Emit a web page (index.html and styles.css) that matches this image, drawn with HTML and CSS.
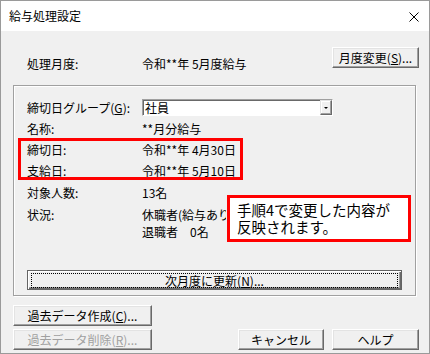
FILE: index.html
```html
<!DOCTYPE html>
<html lang="ja">
<head>
  <meta charset="UTF-8">
  <title>給与処理設定</title>
  <link rel="stylesheet" href="styles.css">
</head>
<body>

<div class="window">
  <div class="titlebar">
    <span class="title">給与処理設定</span>
    <svg class="close" width="10" height="10" viewBox="0 0 10 10">
      <path d="M0.5 0.5 L9.5 9.5 M9.5 0.5 L0.5 9.5" stroke="#000" stroke-width="1" fill="none" />
    </svg>
  </div>

  <div class="body">
    <div class="top">
      <div class="row top-row">
        <span>処理月度:</span>
        <span>令和**年 5月度給与</span>
      </div>
      <button class="btn btn-month">月度変更(<u>S</u>)...</button>
    </div>

    <div class="group">
      <div class="row">
        <span>締切日グループ(<u>G</u>):</span>
        <div class="select">
          <span class="select-text">社員</span>
          <span class="select-btn"><span class="arrow"></span></span>
        </div>
      </div>
      <div class="row">
        <span>名称:</span>
        <span>**月分給与</span>
      </div>
      <div class="row">
        <span>締切日:</span>
        <span>令和**年 4月30日</span>
      </div>
      <div class="row">
        <span>支給日:</span>
        <span>令和**年 5月10日</span>
      </div>
      <div class="row row-tall">
        <span>対象人数:</span>
        <span>13名</span>
      </div>
      <div class="row status">
        <span>状況:</span>
        <div class="status-lines">
          <div class="clip">休職者(給与あり,</div>
          <div>退職者　0名</div>
        </div>
      </div>

      <button class="btn btn-default"><span class="focus">次月度に更新(<u>N</u>)...</span></button>

      <div class="highlight"></div>
    </div>

    <div class="bottom">
      <button class="btn btn-wide">過去データ作成(<u>C</u>)...</button>
      <div class="bottom-row">
        <button class="btn btn-wide" disabled>過去データ削除(<u>R</u>)...</button>
        <div class="actions">
          <button class="btn btn-cancel">キャンセル</button>
          <button class="btn btn-help">ヘルプ</button>
        </div>
      </div>
    </div>

    <div class="callout">手順4で変更した内容が<br>反映されます。</div>
  </div>
</div>

</body>
</html>
```

FILE: styles.css
```css
body {
  margin: 0;
  font-family: "Noto Sans CJK JP", "Noto Sans", sans-serif;
  font-size: 12px;
  color: #000;
  background: #fff;
}
.window {
  width: 430px;
  height: 354px;
  box-sizing: border-box;
  border: 1px solid #9a9a9a;
  display: flex;
  flex-direction: column;
}
.titlebar {
  height: 30px;
  background: #fff;
  display: flex;
  align-items: center;
  justify-content: space-between;
  padding: 0 10px 0 8px;
}
.title {
  font-size: 12px;
  line-height: 14px;
}
.close {
  display: block;
  margin-top: 1px;
}
.body {
  position: relative;
  flex: 1;
  background: #f0f0f0;
}
.top {
  display: flex;
  justify-content: space-between;
  align-items: flex-start;
  padding: 16px 10px 0 26px;
}
.top-row {
  margin-top: 6px;
  height: 20px;
  width: 250px;
}
.row {
  display: grid;
  grid-template-columns: 115px 1fr;
  align-items: center;
  height: 21px;
  white-space: nowrap;
}
.row-tall {
  height: 22px;
}
.status {
  align-items: start;
  height: auto;
  margin-top: 3px;
  line-height: 17px;
}
.clip {
  width: 84px;
  overflow: hidden;
}
.group {
  position: relative;
  margin: 11px 13px 0 12px;
  padding: 11px 0 5px 13px;
  border: 1px solid #a0a0a0;
  box-shadow: inset 1px 1px 0 #fff, 1px 1px 0 #fff;
}
.select {
  width: 191px;
  height: 17px;
  box-sizing: border-box;
  background: #fff;
  border: 1px solid;
  border-color: #a0a0a0 #fff #fff #a0a0a0;
  box-shadow: inset 1px 1px 0 #696969;
  display: flex;
  justify-content: space-between;
  align-items: center;
}
.select-text {
  padding-left: 2px;
  line-height: 14px;
}
.select-btn {
  width: 12px;
  height: 15px;
  box-sizing: border-box;
  background: #f0f0f0;
  border: 1px solid;
  border-color: #e3e3e3 #696969 #696969 #e3e3e3;
  box-shadow: inset -1px -1px 0 #a0a0a0, inset 1px 1px 0 #fff;
  display: flex;
  align-items: center;
  justify-content: center;
}
.arrow {
  width: 0;
  height: 0;
  border-left: 2px solid transparent;
  border-right: 2px solid transparent;
  border-top: 2px solid #000;
}
.btn {
  font-family: inherit;
  font-size: 12px;
  color: #000;
  background: #f0f0f0;
  border: 1px solid;
  border-color: #fff #696969 #696969 #fff;
  box-shadow: inset -1px -1px 0 #a0a0a0, inset 1px 1px 0 #e3e3e3;
  height: 21px;
  padding: 0;
  line-height: 17px;
  cursor: pointer;
}
.btn u {
  text-underline-offset: 1px;
}
.btn:disabled {
  color: #a0a0a0;
  cursor: default;
}
.btn-month {
  width: 87px;
}
.btn-default {
  display: block;
  width: 375px;
  height: 20px;
  margin-top: 30px;
  border: 1px solid #646464;
  box-shadow: inset 1px 1px 0 #fff, inset -1px -1px 0 #696969, inset -2px -2px 0 #a0a0a0;
  padding: 2px 3px 3px 3px;
}
.focus {
  display: block;
  height: 13px;
  line-height: 13px;
  border: 1px dotted #000;
}
.highlight {
  position: absolute;
  left: 4px;
  top: 52px;
  width: 225px;
  height: 42px;
  box-sizing: border-box;
  border: 3px solid #f00;
}
.bottom {
  padding: 9px 10px 0 12px;
  display: flex;
  flex-direction: column;
  gap: 3px;
}
.bottom-row {
  display: flex;
  justify-content: space-between;
}
.actions {
  display: flex;
  gap: 8px;
}
.btn-wide {
  width: 139px;
}
.btn-cancel {
  width: 86px;
}
.btn-help {
  width: 87px;
}
.callout {
  position: absolute;
  left: 226px;
  top: 164px;
  width: 184px;
  height: 47px;
  box-sizing: border-box;
  border: 3px solid #f00;
  background: #fff;
  padding: 3px 0 0 7px;
  font-size: 14.5px;
  line-height: 17px;
  white-space: nowrap;
}
```
